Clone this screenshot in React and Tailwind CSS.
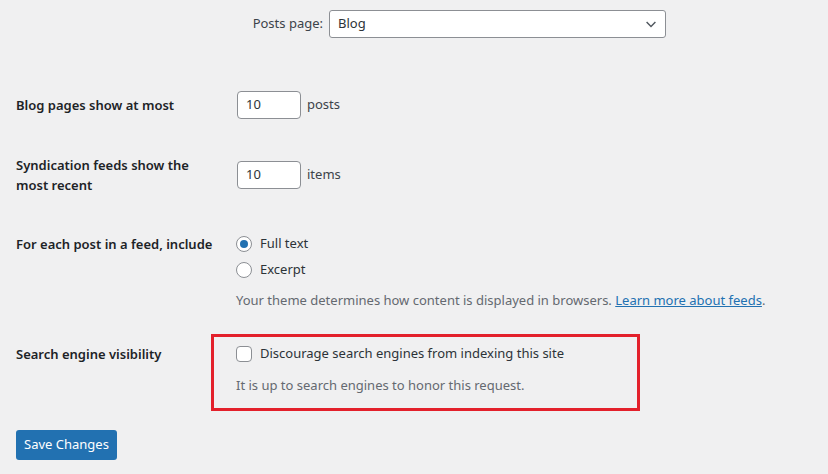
import React from "react";

const labelCls = "text-[#1d2327] font-semibold leading-5";

function Radio({ checked, label }) {
  return (
    <label className="flex items-center h-5">
      <span className="w-4 h-4 rounded-full border border-[#8c8f94] bg-white flex items-center justify-center">
        {checked && <span className="w-2 h-2 rounded-full bg-[#2271b1]" />}
      </span>
      <span className="ml-[8px] text-[#2c3338]">{label}</span>
    </label>
  );
}

export default function App() {
  return (
    <div className="w-[828px] h-[474px] overflow-hidden bg-[#f0f0f1] pl-4 text-[13px] font-['Noto_Sans',sans-serif] text-[#3c434a]">
      {/* Posts page */}
      <div className="flex items-center mt-[10px] ml-[200px] h-7">
        <span className="w-[107px] text-right text-[#3c434a]">Posts page:</span>
        <div className="ml-[6px] w-[337px] h-7 bg-white border border-[#8c8f94] rounded-[3px] flex items-center justify-between pl-2 pr-[6px] text-[#2c3338]">
          <span>Blog</span>
          <svg width="16" height="16" viewBox="0 0 20 20" fill="none">
            <path d="M4.5 7.5l5.5 5.5 5.5-5.5" stroke="#50575e" strokeWidth="1.8" />
          </svg>
        </div>
      </div>

      {/* Blog pages */}
      <div className="flex items-center mt-[53px] h-7">
        <div className={`w-[221px] ${labelCls}`}>Blog pages show at most</div>
        <div className="w-16 h-7 bg-white border border-[#8c8f94] rounded-[4px] flex items-center pl-2 text-[#2c3338]">10</div>
        <span className="ml-[6px]">posts</span>
      </div>

      {/* Syndication */}
      <div className="flex items-center mt-[36px] h-10">
        <div className={`w-[221px] pr-6 ${labelCls}`}>Syndication feeds show the most recent</div>
        <div className="w-16 h-7 bg-white border border-[#8c8f94] rounded-[4px] flex items-center pl-2 text-[#2c3338]">10</div>
        <span className="ml-[6px]">items</span>
      </div>

      {/* Feed content */}
      <div className="flex items-start mt-[39px]">
        <div className={`w-[220px] ${labelCls}`}>For each post in a feed, include</div>
        <div className="flex flex-col">
          <Radio checked label="Full text" />
          <div className="mt-[6px]">
            <Radio label="Excerpt" />
          </div>
          <p className="mt-[10px] leading-5 text-[#646970]">
            Your theme determines how content is displayed in browsers.{" "}
            <a className="text-[#2271b1] underline">Learn more about feeds</a>.
          </p>
        </div>
      </div>

      {/* Search engine visibility */}
      <div className="flex items-start mt-[24px]">
        <div className={`w-[195px] mt-[10px] ${labelCls}`}>Search engine visibility</div>
        <div className="w-[429px] border-[3px] border-[#e3202b] pl-[22px] pt-[7px] pb-[13px]">
          <label className="flex items-center h-5">
            <span className="w-4 h-4 rounded-[4px] border border-[#8c8f94] bg-white" />
            <span className="ml-[8px] text-[#2c3338]">Discourage search engines from indexing this site</span>
          </label>
          <p className="mt-[11px] leading-5 text-[#646970]">It is up to search engines to honor this request.</p>
        </div>
      </div>

      <button className="mt-[19px] h-[30px] w-[101px] rounded-[3px] bg-[#2271b1] text-white flex items-center justify-center">
        Save Changes
      </button>
    </div>
  );
}
